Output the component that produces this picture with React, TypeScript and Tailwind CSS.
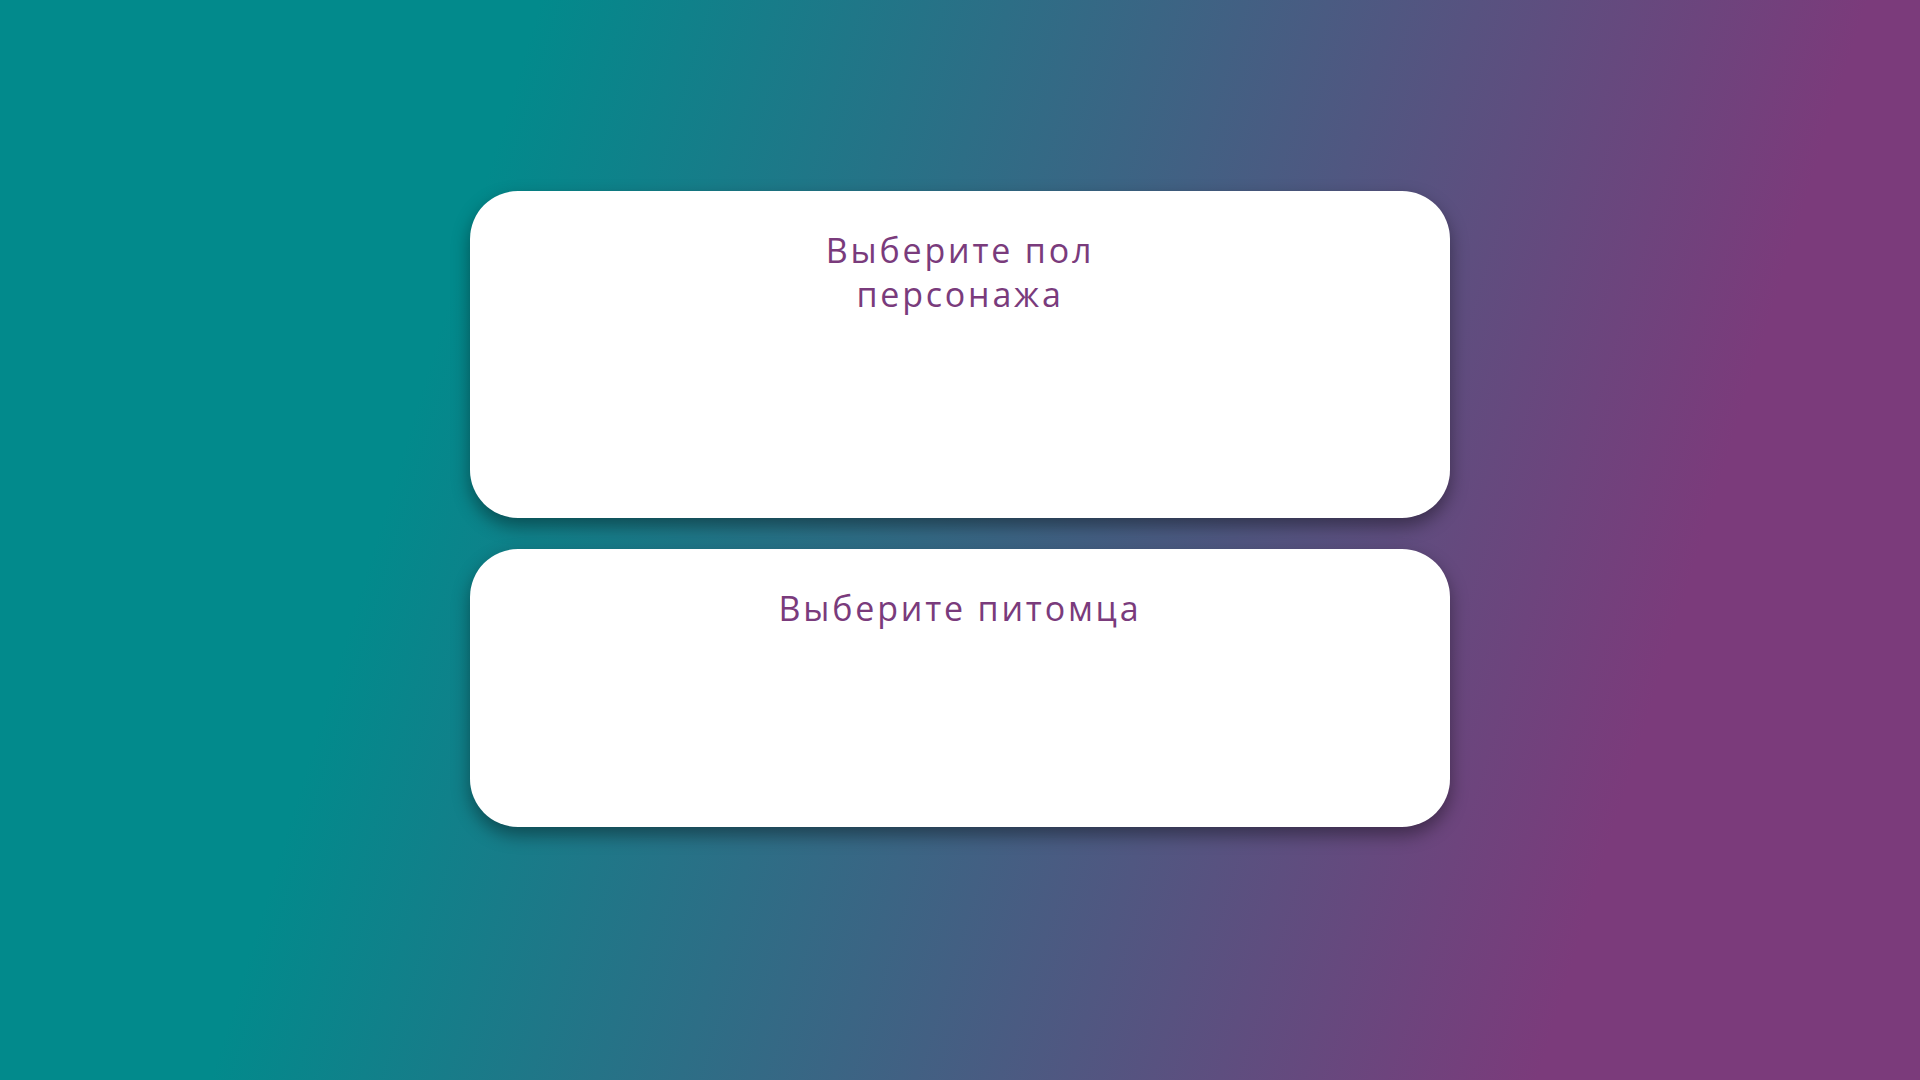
import React from 'react';

const Card: React.FC<{ title: string; height: string; narrow?: boolean }> = ({ title, height, narrow }) => {
    return (
        <div className={`w-[980px] ${height} bg-white rounded-[48px] shadow-[0_8px_18px_rgba(0,0,0,0.4)] flex flex-col items-center pt-[37px]`}>
            <h2
                className={`text-[34px] leading-[44px] font-medium text-center text-[#7a3b7c] tracking-[2.8px] ${narrow ? 'max-w-[420px]' : ''}`}
                style={{ fontFamily: '"Open Sans", "Noto Sans", sans-serif' }}
            >
                {title}
            </h2>
        </div>
    );
};

const App: React.FC = () => {
    return (
        <div className="w-full min-h-screen h-[1080px] bg-[linear-gradient(107deg,#028a8c_24%,#7b3b7b_83%)] flex flex-col items-center pt-[191px] gap-[31px]">
            <Card title="Выберите пол персонажа" height="h-[327px]" narrow />
            <Card title="Выберите питомца" height="h-[278px]" />
        </div>
    );
};

export default App;
